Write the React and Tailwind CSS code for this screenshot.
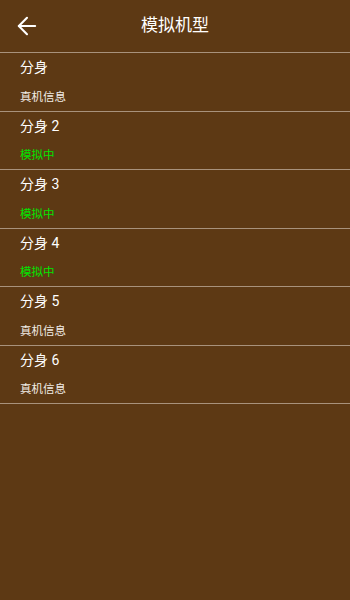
import { ArrowLeft } from 'lucide-react'

const items = [
  { name: '分身', status: '真机信息', active: false },
  { name: '分身 2', status: '模拟中', active: true },
  { name: '分身 3', status: '模拟中', active: true },
  { name: '分身 4', status: '模拟中', active: true },
  { name: '分身 5', status: '真机信息', active: false },
  { name: '分身 6', status: '真机信息', active: false },
]

export default function App() {
  return (
    <div
      className="w-[350px] h-[600px] bg-[#5d3914] text-white"
      style={{ fontFamily: 'Roboto, "Noto Sans CJK SC", sans-serif' }}
    >
      {/* Toolbar */}
      <div className="relative h-[53px] flex items-center justify-center border-b border-[#a8927c]">
        <ArrowLeft className="absolute left-[13px] top-[12px] w-[28px] h-[28px]" strokeWidth={1.8} />
        <span className="text-[17px]">模拟机型</span>
      </div>

      {/* List */}
      <div>
        {items.map((item) => (
          <div key={item.name} className="h-[58.5px] border-b border-[#a8927c] px-5 flex flex-col">
            <div className="text-[14px] leading-none mt-[7px]">{item.name}</div>
            <div
              className={
                'text-[11.5px] leading-none mt-[17.5px] ' +
                (item.active ? 'text-[#00e600]' : 'text-[#f2ece6]')
              }
            >
              {item.status}
            </div>
          </div>
        ))}
      </div>
    </div>
  )
}
